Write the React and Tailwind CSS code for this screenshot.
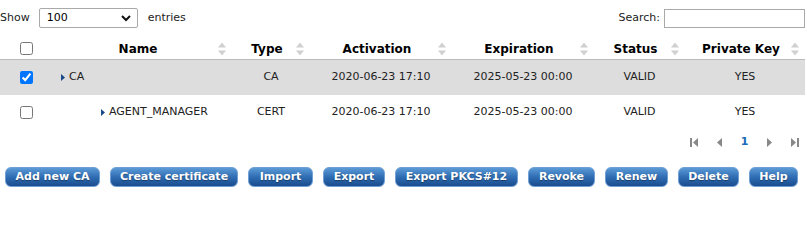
import React from 'react'

const font = "font-['DejaVu_Sans',Verdana,sans-serif]"

const columns = [
  { key: 'name', label: 'Name', w: 'w-[180px]' },
  { key: 'type', label: 'Type', w: 'w-[78px]' },
  { key: 'activation', label: 'Activation', w: 'w-[142px]' },
  { key: 'expiration', label: 'Expiration', w: 'w-[142px]' },
  { key: 'status', label: 'Status', w: 'w-[91px]' },
  { key: 'key', label: 'Private Key', w: 'w-[120px]' },
]

const rows = [
  { name: 'CA', depth: 0, type: 'CA', activation: '2020-06-23 17:10', expiration: '2025-05-23 00:00', status: 'VALID', key: 'YES', checked: true },
  { name: 'AGENT_MANAGER', depth: 1, type: 'CERT', activation: '2020-06-23 17:10', expiration: '2025-05-23 00:00', status: 'VALID', key: 'YES', checked: false },
]

const buttons = [
  { label: 'Add new CA', w: 'w-[95px]' },
  { label: 'Create certificate', w: 'w-[128px]' },
  { label: 'Import', w: 'w-[65px]' },
  { label: 'Export', w: 'w-[62px]' },
  { label: 'Export PKCS#12', w: 'w-[123px]' },
  { label: 'Revoke', w: 'w-[67px]' },
  { label: 'Renew', w: 'w-[63px]' },
  { label: 'Delete', w: 'w-[61px]' },
  { label: 'Help', w: 'w-[49px]' },
]

function SortIcon() {
  return (
    <svg width="8" height="13" viewBox="0 0 8 13" className="absolute right-[6px] top-1/2 -translate-y-1/2">
      <path d="M4 0 L8 5 L0 5 Z" fill="#d0d0d0" />
      <path d="M0 8 L8 8 L4 13 Z" fill="#d0d0d0" />
    </svg>
  )
}

function Arrow() {
  return (
    <svg width="4" height="7" viewBox="0 0 4 7" className="shrink-0">
      <path d="M0 0 L4 3.5 L0 7 Z" fill="#1a4a8a" />
    </svg>
  )
}

function PageIcon({ dir, end }) {
  return (
    <svg width="11" height="11" viewBox="0 0 11 11">
      {dir === 'left' ? (
        <>
          {end && <rect x="1" y="1" width="2" height="9" fill="#888" />}
          <path d={end ? 'M9 1 L4 5.5 L9 10 Z' : 'M8 1 L3 5.5 L8 10 Z'} fill="#888" />
        </>
      ) : (
        <>
          {end && <rect x="8" y="1" width="2" height="9" fill="#888" />}
          <path d={end ? 'M2 1 L7 5.5 L2 10 Z' : 'M3 1 L8 5.5 L3 10 Z'} fill="#888" />
        </>
      )}
    </svg>
  )
}

export default function App() {
  return (
    <div className={`${font} w-[807px] bg-white text-[11px] text-[#222]`}>
      {/* Length + search */}
      <div className="flex items-center justify-between pt-2 h-[28px]">
        <div className="flex items-center">
          <span>Show</span>
          <div className="relative ml-[9px] w-[99px] h-[20px]">
            <select className="appearance-none w-full h-full border border-[#a9a9a9] rounded-[2px] pl-[7px] text-[11px] text-black bg-white">
              <option>100</option>
            </select>
            <svg width="10" height="7" viewBox="0 0 10 7" className="absolute right-[7px] top-[7px] pointer-events-none">
              <path d="M1 1 L5 5 L9 1" stroke="#111" strokeWidth="2" fill="none" />
            </svg>
          </div>
          <span className="ml-[10px]">entries</span>
        </div>
        <div className="flex items-center">
          <span>Search:</span>
          <input className="ml-[4px] w-[141px] h-[19px] border border-[#a9a9a9] mr-[2px]" />
        </div>
      </div>

      {/* Table */}
      <div className="mt-[9px] w-[805px]">
        <div className="flex h-[23px] pt-[1px] border-b border-[#bbb] text-[12px] font-bold text-black">
          <div className="w-[52px] flex items-center justify-center">
            <input type="checkbox" className="w-[13px] h-[13px] m-0" />
          </div>
          {columns.map(c => (
            <div key={c.key} className={`${c.w} relative flex items-center justify-center pl-[10px] pr-[18px]`}>
              {c.label}
              <SortIcon />
            </div>
          ))}
        </div>
        {rows.map((r, i) => (
          <div key={r.name} className={`flex h-[35px] items-center ${i === 0 ? 'bg-[#dddddd]' : 'bg-white'}`}>
            <div className="w-[52px] flex items-center justify-center">
              <input type="checkbox" defaultChecked={r.checked} className="w-[13px] h-[13px] m-0" />
            </div>
            <div className={`w-[180px] flex items-center gap-[4px] ${r.depth ? 'pl-[49px]' : 'pl-[9px]'}`}>
              <Arrow />
              <span>{r.name}</span>
            </div>
            <div className="w-[78px] text-center">{r.type}</div>
            <div className="w-[142px] text-center">{r.activation}</div>
            <div className="w-[142px] text-center">{r.expiration}</div>
            <div className="w-[91px] text-center">{r.status}</div>
            <div className="w-[120px] text-center">{r.key}</div>
          </div>
        ))}
      </div>

      {/* Pagination */}
      <div className="flex items-center justify-end h-[23px] mt-[1px] pr-[7px] gap-[14px]">
        <PageIcon dir="left" end />
        <PageIcon dir="left" />
        <span className="w-[11px] text-center font-bold text-[#1a6ab8]">1</span>
        <PageIcon dir="right" />
        <PageIcon dir="right" end />
      </div>

      {/* Buttons */}
      <div className="flex items-center gap-[10px] pl-[5px] mt-[13px] pb-[14px]">
        {buttons.map(b => (
          <button
            key={b.label}
            className={`${b.w} h-[20px] rounded-[6px] border border-[#6f9fd4] bg-gradient-to-b from-[#5b9ad6] via-[#2f6db3] to-[#1b4d8f] text-white font-bold text-[11px] [text-shadow:0_1px_1px_rgba(0,0,0,0.4)] whitespace-nowrap`}
          >
            {b.label}
          </button>
        ))}
      </div>
    </div>
  )
}
